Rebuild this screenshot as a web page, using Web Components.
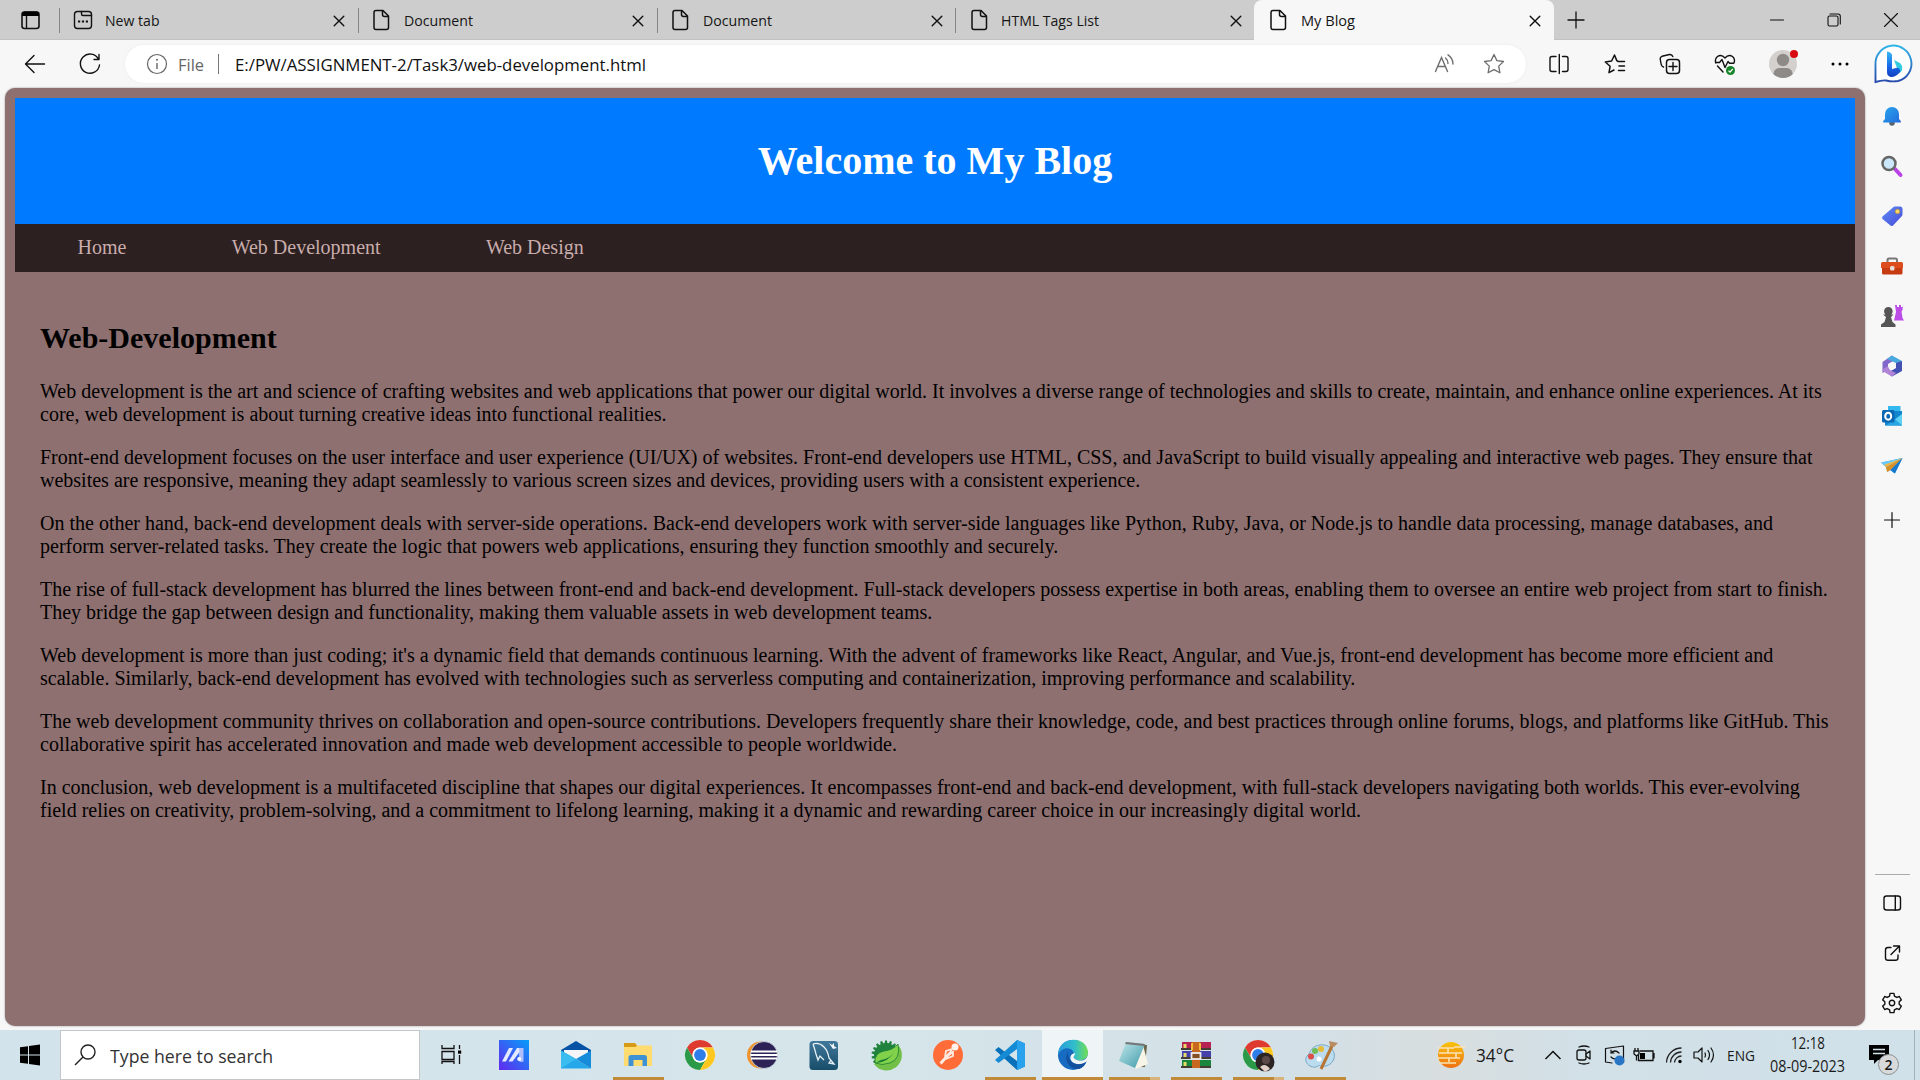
<!DOCTYPE html>
<html lang="en">
<head>
<meta charset="utf-8">
<title>My Blog</title>
<style>
html,body{margin:0;padding:0;width:1920px;height:1080px;overflow:hidden;background:#f7f7f7;font-family:"Open Sans","Noto Sans",sans-serif}
</style>
</head>
<body>
<desktop-screen></desktop-screen>
<script>
const S='fill="none" stroke="#111" stroke-width="1.4" stroke-linecap="round" stroke-linejoin="round"';
const line=w=>`fill="none" stroke="#111" stroke-width="${w}" stroke-linecap="round" stroke-linejoin="round"`;
const STAR='M0-9.5L2.9-3.4 9.5-2.5 4.7 2.1 5.9 8.8 0 5.6-5.9 8.8-4.7 2.1-9.5-2.5-2.9-3.4Z';
const CHROME='<circle r="15" fill="#fff"/><path d="M-13-7.5A15 15 0 0 1 13-7.5L0-7.5A7.5 7.5 0 0 0-6.5 3.7Z" fill="#de3a2f"/><path d="M-13-7.5A15 15 0 0 0 0 15L6.5 3.7A7.5 7.5 0 0 1-6.5 3.7Z" fill="#2a9a48"/><path d="M13-7.5A15 15 0 0 1 0 15L6.5 3.7A7.5 7.5 0 0 0 0-7.5Z" fill="#fcc81f"/><circle r="7.5" fill="#fff"/><circle r="5.9" fill="#2f7de9"/>';
const gear=(n,r1,r2)=>{let d='';for(let i=0;i<n;i++){const a=i*2*Math.PI/n-Math.PI/2;[[-.34,r1],[-.2,r2],[.2,r2],[.34,r1]].forEach(([o,r])=>{d+=(d?'L':'M')+(Math.cos(a+o*6/n)*r).toFixed(2)+' '+(Math.sin(a+o*6/n)*r).toFixed(2)});}return d+'Z'};
const ICONS={
workspaces:`<rect x="-8" y="-8" width="17" height="16.5" rx="2.5" ${line(1.6)}/><path d="M-8-4V-6Q-8-8.500-5.500-8.500H6.500Q9-8.500 9-6V-4Z" fill="#000"/><path d="M-3.500-4V8" ${S}/>`,
newtab:`<rect x="-8.500" y="-8.500" width="17" height="17" rx="3" ${S}/><path d="M-1.500-8.500V-6Q-1.500-4.500 0-4.500H8.500" ${S}/><path d="M-5 .4h2.200v2.200H-5zM-1.100.4h2.200v2.200H-1.100zM2.800.4H5v2.200H2.800z" fill="#111"/>`,
page:`<path d="M-7-7.500Q-7-9.500-5-9.500H2L7.500-4V7.500Q7.500 9.500 5.500 9.500H-5Q-7 9.500-7 7.500ZM1.500-9.500V-5.500Q1.500-3.500 3.500-3.500H7.500" ${line(1.5)}/>`,
close:`<path d="M-4.800-4.800L4.800 4.800M4.800-4.800L-4.800 4.800" ${S}/>`,
plus:`<path d="M-8 0H8M0-8V8" ${line(1.3)}/>`,
plus2:`<path d="M-7.500 0H7.500M0-7.500V7.500" ${line(1.2)}/>`,
min:`<path d="M-6.500 0H6.500" ${line(1.2)}/>`,
restore:`<rect x="-6" y="-4" width="10" height="10" rx="1.500" ${line(1.1)}/><path d="M-4-6H4Q6.300-6 6.300-3.700V4" ${line(1.1)}/>`,
winclose:`<path d="M-6.500-6.500L6.500 6.500M6.500-6.500L-6.500 6.500" ${line(1.1)}/>`,
back:`<path d="M9.500 0H-9.500M-1-8.500L-9.500 0-1 8.500" ${S}/>`,
reload:`<path d="M8.500-4.800A9.600 9.600 0 1 0 9.500 1M9-9.500V-4.500H4" ${S}/>`,
info:`<circle r="9.500" fill="none" stroke="#666" stroke-width="1.200"/><path d="M0-1V5" stroke="#666" stroke-width="1.400"/><circle cy="-4.300" r="1" fill="#666"/>`,
read:`<path d="M-8.500 7.500L-2.500-6.500 3.500 7.500M-6.500 2.500H1.500M1.500-6Q4-4 4-.5M4-9.200Q9-6 9 0" fill="none" stroke="#6d6d6d" stroke-width="1.400" stroke-linecap="round"/>`,
star:`<path d="${STAR}" fill="none" stroke="#6d6d6d" stroke-width="1.300" stroke-linejoin="round"/>`,
split:`<path d="M-3-7.500H-7Q-9-7.500-9-5.500V5.500Q-9 7.500-7 7.500H-3M3.500-7.500H7Q9-7.500 9-5.500V5.500Q9 7.500 7 7.500H3.500M.3-9.500V9.500" ${S}/>`,
favs:`<path d="M3.200-2.500L1.800-3.400-.5-9-3.400-3-9.700-2-4.900 2.300-6 8.700-1 6M3.200-2.500H9.500M4 2H9.500M3.500 6.500H9.500" ${line(1.5)}/>`,
collect:`<rect x="-3.500" y="-4.500" width="13" height="14" rx="3" ${line(1.5)}/><path d="M3-1.500V6.500M-1 2.500H7M-6.500 3Q-8.500 2.500-9-.5L-9.800-5Q-10-7-8-7.700L-.5-9.500Q2-9.800 2.800-7.500" ${S}/>`,
heart:`<path d="M-9.200-1Q-10.500-5-7.500-7.500-3.500-10 0-6 3.500-10 7.500-7.500 10.500-5 9-1M-7.500 2L-2 8M-9.500-1.500H-5.500L-3-4.500 0 3.500 3-2.500 4.500-.8H8.500" ${S}/><circle cx="5.500" cy="6.500" r="4.500" fill="#17852a"/><path d="M3.500 6.700L5 8.200 7.700 5" fill="none" stroke="#fff" stroke-width="1.200"/>`,
profile:`<clipPath id="pc"><circle r="14"/></clipPath><circle r="14" fill="#d3d0ce"/><g clip-path="url(#pc)" fill="#8d8a88"><circle cy="-4" r="6.200"/><path d="M-10 14Q-10 4-4 4H4Q10 4 10 14Z"/></g><circle cx="11" cy="-10" r="4" fill="#d90b12"/>`,
dots:`<circle cx="-7" r="1.500"/><circle r="1.500"/><circle cx="7" r="1.500"/>`,
bing:`<linearGradient id="bo" x2="0" y2="1"><stop stop-color="#31b6e8"/><stop offset="1" stop-color="#2849ad"/></linearGradient><linearGradient id="bb" x2="0" y2="1"><stop stop-color="#36b9f5"/><stop offset=".6" stop-color="#1767e8"/><stop offset="1" stop-color="#143fc0"/></linearGradient><path d="M-17.500 17.500V1A18 18 0 1 1 5 17Q-1 18-7 16.500-11 16-17.500 18Z" fill="#fff" stroke="url(#bo)" stroke-width="1.900"/><path d="M1-4L7-1Q11 3 8 8L-2 12-5 8 4 4Z" fill="#32cce0"/><path d="M-6-12.500Q-1.500-12-1 -9V5L5 3.500Q10 7 4 11 0 14-3.500 12.500-6 11.500-6 8Z" fill="url(#bb)"/>`,
bell:`<linearGradient id="be" x2="1" y2="1"><stop stop-color="#26a6ef"/><stop offset="1" stop-color="#246bdb"/></linearGradient><circle cy="7" r="2.800" fill="#59656f"/><path d="M-8.800 6.500V5L-7 3V-2A7 7 0 0 1 7-2V3L8.800 5V6.500Z" fill="url(#be)"/>`,
search:`<path d="M3 3L8.500 9" stroke="#ba42e6" stroke-width="4" stroke-linecap="round"/><circle cx="-3" cy="-2.500" r="6.500" fill="#cbe8fb" stroke="#666" stroke-width="2.500"/>`,
tag:`<linearGradient id="tg" x2="1" y2="1"><stop stop-color="#5b8df5"/><stop offset="1" stop-color="#4a4ad8"/></linearGradient><path d="M1-8.500Q1.700-9.500 3-9.500H8Q10.500-9.500 10.500-7V-2Q10.500-.5 9.500.5L1 9.500Q0 10.500-1.500 9.500L-9.500 3Q-10.500 1.500-9.500.5Z" fill="url(#tg)"/><circle cx="5.500" cy="-4.500" r="2.300" fill="#ffd86a" stroke="#b59450"/>`,
tools:`<path d="M-4.500-3.500V-6Q-4.500-7.500-3-7.500H3.500Q5-7.500 5-6V-3.500" fill="none" stroke="#777" stroke-width="2"/><rect x="-10" y="-2" width="20.500" height="10.500" rx="1.500" fill="#c63b12"/><path d="M-11-2.500Q-11-4-9.500-4H9.500Q11-4 11-2.500V2H-11Z" fill="#dd4c1c"/><rect x="-2" y="0" width="4.500" height="4.500" rx="1.500" fill="#e9dcd8"/>`,
chess:`<path d="M3-11H5V-9H7V-11H9V-9H11V-11L10.500-6 9.500-4.500 10.500 2 12 4.500H2L4-4Z" fill="#bb4ce8"/><path d="M-11 11V8.500L-7.500 6-6 1-9-1.500H-6.500A4.300 4.300 0 1 1-.8-1.500H1.500L-1 1 .5 6 3.500 8.500V11Z" fill="#555"/>`,
m365:`<path d="M-9.500-4L0-10.500 3-6-4-2V4L-9.500 7Z" fill="#8067c9"/><path d="M-5-7L0-10.500 10-5V3L4 0V-3L-3-6Z" fill="#4ba8df"/><path d="M10-5V5L0 10.500-5 7 4 2V-3Z" fill="#4350b4"/><path d="M-9.500 3.500L-4 0-2 4 4 7 0 10.500-9.500 5Z" fill="#b183d6"/><circle r="3.600" fill="#f7f7f7"/>`,
outlook:`<path d="M-4-10H8.500V1H-4Z" fill="#33b7ef"/><path d="M-7-5H10V9.500H-7Z" fill="#1285cf"/><path d="M10-2V9.500L2 4Z" fill="#5fd2f4"/><path d="M-6 9.500L3 3 10 9.500Z" fill="#2aa6e5"/><rect x="-10" y="-6" width="12.500" height="12.500" rx="1.500" fill="#0868b4"/><ellipse cx="-3.800" cy=".2" rx="3" ry="3.500" fill="none" stroke="#fff" stroke-width="2"/>`,
plane:`<path d="M-11-3.500L10.500-8 2.500 7.500-2 4-4.500 6-6 1Z" fill="#40a9eb"/><path d="M10.500-8L-6 1-5 6-1.500 4Z" fill="#d99125"/><path d="M10.500-8L-1.500 4 3 7.500Z" fill="#1778ce"/><path d="M-11-3.500L10.500-8-6 1Z" fill="#6bcaf4"/><path d="M10.500-8L-8-1-6 1Z" fill="#f5b33b"/>`,
panel:`<rect x="-8" y="-7" width="16.500" height="14" rx="2.500" ${S}/><path d="M3.300-7V7" ${S}/>`,
external:`<path d="M-1-5.500H-4Q-6.500-5.500-6.500-3V5Q-6.500 7.300-4 7.300H3.500Q6 7.300 6 5V2M1.500-7H7.500V-1M7-6.500L-1 1.500" ${S}/>`,
gear:`<path d="${gear(6,7.300,9.800)}" ${S}/><circle r="2.700" ${S}/>`,
start:`<path d="M-10-7.800L-2-8.800V-.6H-10ZM-1-9L10-10.500V-.6H-1ZM-10 .6H-2V8.800L-10 7.800ZM-1 .6H10V10.500L-1 9Z" fill="#000"/>`,
find:`<circle cx="3" cy="-3" r="7" fill="none" stroke="#222" stroke-width="1.400"/><path d="M-2 2L-10 10" stroke="#222" stroke-width="1.500"/>`,
tasks:`<path d="M-10-10V-6.500H2V-10M-10-3.500H2V4.500H-10ZM-10 9V6.500H2V9M7.500-10V-6M7.500 0V9" fill="none" stroke="#111" stroke-width="1.300"/><rect x="6" y="-4.500" width="3.200" height="3.200"/>`,
myasus:`<linearGradient id="ma" y1="1" x2="1" y2="0"><stop stop-color="#6229ee"/><stop offset="1" stop-color="#069dfa"/></linearGradient><path d="M-15-15H15V15H-15Z" fill="url(#ma)"/><path d="M-12 6.500L-5-7H-1L-8 6.500ZM-5.500 6.500L3-7H9V6.500H5.500V-3L-1.500 6.500Z" fill="#e3eaff"/><path d="M5-7H9.500V6.500H6Z" fill="#b2bfff"/><circle cx="5.200" cy="4" r="2" fill="#fff"/>`,
mail:`<path d="M-15-5L0-14 15-5V8H-15Z" fill="#0752a5"/><path d="M-12-5H12V6L0 9-12 5Z" fill="#f4f5f6"/><path d="M-15-4.500L0 4 15 13.500H-15Z" fill="#25a8ea"/><path d="M15-4.500L0 4 15 13.500Z" fill="#168bd9"/><path d="M-15-4.500L0 4-15 13.500Z" fill="#3bbcf0"/>`,
folder:`<path d="M-14-12H-3L0-9H13V10H-14Z" fill="#ffd35c"/><path d="M-14-12H-3L-1-9-3-8H-14Z" fill="#d79a17"/><path d="M-14-8H-2L0-9.500H14V11H-14Z" fill="#ffdb70"/><path d="M-9.500 11V2.500Q-9.500 0-7 0H6.500Q9 0 9 2.500V11H4.500V5H-4.500V11Z" fill="#3e92d3"/>`,
chrome:CHROME,
eclipse:`<circle cx="-1.500" r="13.500" fill="#f1942d"/><circle cx="2" r="13.500" fill="#2d2255" stroke="#d3e2e9" stroke-width=".8"/><path d="M-11-3.500H15M-11.500 0H15.500M-11 3.500H15" stroke="#fff" stroke-width="1.800"/>`,
mysql:`<linearGradient id="my" x2="0" y2="1"><stop stop-color="#41789a"/><stop offset="1" stop-color="#184d6a"/></linearGradient><rect x="-14.500" y="-14" width="28.500" height="29" rx="3.500" fill="url(#my)"/><path d="M-11-11Q-5-13 0-8 4-4 5 3L10 9 5 8 7 5M-11-11Q-9-5-8-1L-6 5-4 1 0 5" fill="none" stroke="#e5f1f6" stroke-width="1.300"/><path d="M5-12L8-10 10-12 10-9 13-7 9-6Z" fill="#f2f7fa"/>`,
spring:`<path d="${gear(18,12,14.500)}" fill="#20833d"/><path d="M13-9A15 15 0 1 1-12 9Z" fill="#73c048"/><path d="M-11 8Q-12-2-2-4 7-5 12-11 15 4 4 8-4 11-11 8Z" fill="#82d14a" stroke="#187c34" stroke-width=".8"/><path d="M-11 8Q2 8 9-4 4 4-5 5Z" fill="#187c34"/>`,
postman:`<circle r="15" fill="#ff6c37"/><circle cx="7" cy="-8" r="3.500" fill="#fff4ed"/><path d="M4-5L-8 8M5-3L1 0-7 9M-3 2L-2-4 4-6M5-4V1L-2 4" fill="none" stroke="#ffeadf" stroke-width="1.800"/>`,
vscode:`<path d="M7-15L15-11.500V11.500L7 15-15-5-11.500-8 7 6Z" fill="#0871b9"/><path d="M7-15V-6L-11.500 8-15 5Z" fill="#168bd5"/><path d="M7-15L15-11.500V11.500L7 15Z" fill="#29a2ee"/>`,
edge:`<linearGradient id="e1"><stop stop-color="#2a9bdc"/><stop offset=".55" stop-color="#31bdcb"/><stop offset="1" stop-color="#70df52"/></linearGradient><circle r="15" fill="#176bc0"/><path d="M-15 0C-15-20 15-20 15-2 15 5 6 7 2 4-2 2 3 0 0-4-4-9-12-7-15 0Z" fill="url(#e1)"/><path d="M15-1C14 6 7 7 2 4-1 2 2 1 2-2-5-1-4 8 4 9 8 11 12 8 14 6L17 4V-1Z" fill="#eff4f5"/><path d="M-5-3C-10 5-3 15 6 14 10 13 13 9 13 7 2 13-6 6-5-3Z" fill="#12509d"/>`,
notepad:`<path d="M-7-11L13-10 11 12-1 12Z" fill="#6b6548"/><path d="M9-10L14 9 2 14-2 9Z" fill="#f7f4e8"/><linearGradient id="np" x2="1" y2="1"><stop stop-color="#c3e8eb"/><stop offset="1" stop-color="#3c98a9"/></linearGradient><path d="M-8-13L11-11 1 13-15 6Z" fill="url(#np)"/><path d="M-8-13L11-11 10-9-9-11Z" fill="#777"/>`,
rar:`<path d="M-14-13H15V-6H-14Z" fill="#b62251"/><path d="M-14-4H15V3H-14Z" fill="#4540a9"/><path d="M-14 5H15V13H-14Z" fill="#19863d"/><path d="M-15-6H15M-15 3H15M-15 12H15" stroke="#453d34" stroke-width="2"/><path d="M-11-11V-7M-11-2V2M-11 7V11" stroke="#e8da68" stroke-width="3"/><rect x="-4" y="-13" width="8" height="26" fill="#c76720"/><path d="M-4-12V-5M4-12V-5" stroke="#f2bc36" stroke-width="2"/><rect x="-4.500" y="-2" width="9" height="6" fill="#845126" stroke="#eee" stroke-width="1.800"/>`,
chromeuser:CHROME+`<circle cx="7" cy="7" r="9.500" fill="#2d2524"/><ellipse cx="8" cy="5" rx="4" ry="4" fill="#5b4947"/><path d="M2 12Q7 7 12 14L7 17Z" fill="#e1d0c7"/>`,
paint:`<path d="M-11-1C-8-11 5-13 12-6 17 0 14 9 6 11 1 13-1 9-2 11-7 15-18 8-13 1Z" fill="#bbdcef" stroke="#7aa8c3" stroke-width="1"/><circle cx="-9" cy="1.500" r="3" fill="#dc4d47"/><circle cx="-5" cy="-4" r="3" fill="#71bd55"/><circle cx="1" cy="-6" r="3" fill="#e9bb35"/><circle cx="-1" cy="4" r="2.500" fill="#fff"/><path d="M12-9L1 14" stroke="#b77535" stroke-width="3"/><path d="M10-9L9-14 18-12 14-8Z" fill="#b88d64"/>`,
sun:`<linearGradient id="sn" x2="0" y2="1"><stop stop-color="#f9c30a"/><stop offset="1" stop-color="#ed7115"/></linearGradient><circle r="13" fill="url(#sn)"/><path d="M-13-7H3M3-8H14M-12-2H11M-14 3H9M-12 8H5M-3-2V-7M5-2V3M-2 3V7" stroke="#fbe3b4" stroke-width="1.600"/>`,
chevron:`<path d="M-7.500 4L0-3.500 7.500 4" fill="none" stroke="#111" stroke-width="1.500"/>`,
camera:`<rect x="-7" y="-5" width="9" height="10" rx="2" ${line(1.3)}/><path d="M2-1L6-4V4L2 1M-5-8Q0-10 5-8M-5 8Q0 10 5 8" ${line(1.3)}/>`,
sync:`<path d="M-8.500-6.500L9.500-9V7H5M-8.500-6.500V7L-2 8M5-2Q1-6-3-2V-5M-3-2H0M-3 2Q0 5 3 3" ${line(1.2)}/><circle cx="5.500" cy="5.500" r="5" fill="#2775c4"/>`,
battery:`<path d="M-4-4H9V5.500H-5.500V0M10-2V3.500M-9-7V-4M-6-7V-4M-10-4H-5V-1L-7.500 1-10-1ZM-7.500 1V5.500" fill="none" stroke="#111" stroke-width="1.300"/><path d="M-4-2H1V4H-4Z"/>`,
wifi:`<path d="M-7.500 7.500A15 15 0 0 1 7.500-7M-3.500 7.500A11 11 0 0 1 7.500-3M.5 7.500A7 7 0 0 1 7.500 1" fill="none" stroke="#222" stroke-width="1.300"/><circle cx="6" cy="6.500" r="1.700"/>`,
volume:`<path d="M-10-3H-6L-2-7V7L-6 3H-10ZM1-2Q2 0 1 2M4-4.500Q7 0 4 4.500M7-7Q12 0 7 7" ${line(1.2)}/>`,
notes:`<path d="M-10-10H10V5H-1L-5 9V5H-10Z"/><path d="M-6-5.500H6M-6-1.500H6" stroke="#d3e2e9" stroke-width="1.500"/>`
};
class UiIcon extends HTMLElement{connectedCallback(){
 const s=this.attachShadow({mode:'open'});
 s.innerHTML=`<style>:host{display:flex;align-items:center;justify-content:center;flex:none;width:${this.getAttribute('w')||32}px;height:${this.getAttribute('h')||32}px}svg{width:32px;height:32px;overflow:visible;flex:none}</style><svg viewBox="-16 -16 32 32" aria-hidden="true">${ICONS[this.getAttribute('name')]}</svg>`;}}
customElements.define('ui-icon',UiIcon);

/* A single-line label condensed horizontally to the width given in w. */
class UiLabel extends HTMLElement{connectedCallback(){
 const s=this.attachShadow({mode:'open'});
 s.innerHTML=`<style>:host{display:block;flex:none;white-space:nowrap}span{display:inline-block;white-space:nowrap;transform-origin:0 50%}</style><span><slot></slot></span>`;
 const sp=s.querySelector('span'),w=+this.getAttribute('w');
 this.style.width=w+'px';
 sp.style.transform=`scaleX(${(w/sp.getBoundingClientRect().width).toFixed(4)})`;}}
customElements.define('ui-label',UiLabel);

class BrowserTab extends HTMLElement{connectedCallback(){
 const a=this.hasAttribute('active');
 this.attachShadow({mode:'open'}).innerHTML=`<style>:host{display:flex;flex:none;align-items:center;width:298.800px;height:40px;box-sizing:border-box;font-size:15px;color:#151515;padding-left:7.500px}
 :host([active]){background:#f7f7f7;border-radius:8px 8px 0 0;margin-left:-1px;padding-left:9px;width:300px}
 i{width:1px;height:25px;background:#858585;margin-left:-8px;margin-right:7px}.t{flex:1;display:flex;padding-left:6.500px;line-height:22px;margin-top:-1px}ui-icon:first-of-type{margin-left:-.5px}ui-icon[name=close]{margin-right:3px;margin-top:1px}</style>
 ${a?'':'<i></i>'}<ui-icon name="${this.getAttribute('icon')||'page'}"></ui-icon><div class="t"><ui-label w="${this.getAttribute('w')}">${this.getAttribute('label')}</ui-label></div><ui-icon name="close"></ui-icon>`;}}
customElements.define('browser-tab',BrowserTab);

class TabStrip extends HTMLElement{connectedCallback(){
 this.attachShadow({mode:'open'}).innerHTML=`<style>:host{display:flex;height:40px;background:#cdcdcd;align-items:center;box-shadow:inset 0 -1px #c2c2c2}.g{flex:1}</style>
 <ui-icon name="workspaces" w="59.500"></ui-icon>
 <browser-tab icon="newtab" label="New tab" w="54.500"></browser-tab><browser-tab label="Document" w="69"></browser-tab><browser-tab label="Document" w="69"></browser-tab><browser-tab label="HTML Tags List" w="98"></browser-tab><browser-tab active label="My Blog" w="54"></browser-tab>
 <ui-icon name="plus" w="44"></ui-icon><div class="g"></div><ui-icon name="min" w="57"></ui-icon><ui-icon name="restore" w="57"></ui-icon><ui-icon name="winclose" w="58"></ui-icon>`;}}
customElements.define('tab-strip',TabStrip);

class AddressBar extends HTMLElement{connectedCallback(){
 this.attachShadow({mode:'open'}).innerHTML=`<style>:host{display:flex;height:48px;background:#f7f7f7;align-items:center;font-size:17px}
 .f{width:1401px;height:38px;box-sizing:border-box;border-radius:19px;background:#fff;display:flex;align-items:center;padding-left:16px;margin-right:6px;box-shadow:0 0 3px #e9e9e9}
 .n{margin-left:4.500px;color:#666}i{width:1px;height:20px;background:#777;margin:0 16.500px 0 14px}.g{flex:1}.u{color:#111}</style>
 <ui-icon name="back" w="70"></ui-icon><ui-icon name="reload" w="40"></ui-icon><div style="width:15px"></div>
 <div class="f"><ui-icon name="info"></ui-icon><ui-label class="n" w="26">File</ui-label><i></i><ui-label class="u" w="411">E:/PW/ASSIGNMENT-2/Task3/web-development.html</ui-label><div class="g"></div><ui-icon name="read" w="50"></ui-icon><ui-icon name="star" w="50"></ui-icon><div style="width:7px"></div></div>
 <ui-icon name="split" w="54"></ui-icon><ui-icon name="favs" w="57"></ui-icon><ui-icon name="collect" w="53"></ui-icon><ui-icon name="heart" w="57"></ui-icon><ui-icon name="profile" w="60"></ui-icon><ui-icon name="dots" w="54"></ui-icon><ui-icon name="bing" w="52"></ui-icon>`;}}
customElements.define('address-bar',AddressBar);

class EdgeSidebar extends HTMLElement{connectedCallback(){
 this.attachShadow({mode:'open'}).innerHTML=`<style>:host{display:flex;flex-direction:column;align-items:center;width:36px;padding:2.500px 10px 0 9px}.g{flex:1}hr{width:35px;height:1px;border:0;margin:0 0 2.500px;background:#aaa}</style>
 ${['bell','search','tag','tools','chess','m365','outlook','plane'].map(n=>`<ui-icon name="${n}" h="50"></ui-icon>`).join('')}<ui-icon name="plus2" h="58"></ui-icon><div class="g"></div><hr>${['panel','external','gear'].map(n=>`<ui-icon name="${n}" h="50"></ui-icon>`).join('')}<div style="height:2.500px"></div>`;}}
customElements.define('edge-sidebar',EdgeSidebar);

class BlogPage extends HTMLElement{connectedCallback(){
 const P=["Web development is the art and science of crafting websites and web applications that power our digital world. It involves a diverse range of technologies and skills to create, maintain, and enhance online experiences. At its core, web development is about turning creative ideas into functional realities.",
"Front-end development focuses on the user interface and user experience (UI/UX) of websites. Front-end developers use HTML, CSS, and JavaScript to build visually appealing and interactive web pages. They ensure that websites are responsive, meaning they adapt seamlessly to various screen sizes and devices, providing users with a consistent experience.",
"On the other hand, back-end development deals with server-side operations. Back-end developers work with server-side languages like Python, Ruby, Java, or Node.js to handle data processing, manage databases, and perform server-related tasks. They create the logic that powers web applications, ensuring they function smoothly and securely.",
"The rise of full-stack development has blurred the lines between front-end and back-end development. Full-stack developers possess expertise in both areas, enabling them to oversee an entire web project from start to finish. They bridge the gap between design and functionality, making them valuable assets in web development teams.",
"Web development is more than just coding; it's a dynamic field that demands continuous learning. With the advent of frameworks like React, Angular, and Vue.js, front-end development has become more efficient and scalable. Similarly, back-end development has evolved with technologies such as serverless computing and containerization, improving performance and scalability.",
"The web development community thrives on collaboration and open-source contributions. Developers frequently share their knowledge, code, and best practices through online forums, blogs, and platforms like GitHub. This collaborative spirit has accelerated innovation and made web development accessible to people worldwide.",
"In conclusion, web development is a multifaceted discipline that shapes our digital experiences. It encompasses front-end and back-end development, with full-stack developers navigating both worlds. This ever-evolving field relies on creativity, problem-solving, and a commitment to lifelong learning, making it a dynamic and rewarding career choice in our increasingly digital world."];
 this.attachShadow({mode:'open'}).innerHTML=`<style>:host{display:block;flex:none;width:1860px;height:938px;box-sizing:border-box;padding:10px;background:#8f7070;border-radius:10px;box-shadow:0 0 2px #8a8a8a;font-family:"Liberation Serif",serif;font-size:20px;line-height:23px;color:#000}
 header{background:#007bff;height:126px;display:flex;align-items:center;justify-content:center}h1{margin:0;font-size:40px;line-height:46px;color:#fff}
 nav{height:48px;box-sizing:border-box;background:#2d2020;display:flex;align-items:center;padding:0 0 1px 62.500px;gap:105.300px;color:#c9acac}
 main{padding:25px}h2{font-size:30px;line-height:34px;margin:24px 0 25px}p{margin:0 0 20px}</style>
 <header><h1>Welcome to My Blog</h1></header><nav><span>Home</span><span>Web Development</span><span>Web Design</span></nav><main><h2>Web-Development</h2>${P.map(t=>`<p>${t}</p>`).join('')}</main>`;}}
customElements.define('blog-page',BlogPage);

class TaskApp extends HTMLElement{connectedCallback(){
 const st=this.getAttribute('state')||'';
 this.attachShadow({mode:'open'}).innerHTML=`<style>:host{display:flex;flex-direction:column;flex:none;align-items:center;width:62px;height:50px}
 .b{display:flex;width:51px;height:3px;margin-top:auto}.b b{flex:1;background:#c08a38}.b u{width:10px;background:#d8b37c}
 :host([state=active]){background:#eff4f6;width:61px;margin-left:1px}:host([state=active]) .b{width:61px}</style>
 <ui-icon name="${this.getAttribute('name')}" h="50" style="margin-bottom:-3px"></ui-icon>${st?`<div class="b"><b></b>${st==='multi'?'<u></u>':''}</div>`:''}`;}}
customElements.define('task-app',TaskApp);

class TaskBar extends HTMLElement{connectedCallback(){
 const apps=[['myasus'],['mail'],['folder','open'],['chrome'],['eclipse'],['mysql'],['spring'],['postman'],['vscode','open'],['edge','active'],['notepad','multi'],['rar','open'],['chromeuser','multi'],['paint','open']];
 this.attachShadow({mode:'open'}).innerHTML=`<style>:host{display:flex;height:50px;align-items:center;background:linear-gradient(90deg,#d2e3eb 0,#d5e5ea 45%,#d3e0e7 68%,#d8dedf 75%,#d2e0e7 82%,#d0e1e9);color:#1a1a1a;font-size:16px}
 .s{display:flex;align-items:center;box-sizing:border-box;width:360px;height:50px;border:1px solid #c3c7c9;background:#fff;padding-left:8px;font-size:18.500px;color:#333}
 .t{margin-left:9px}.g{flex:1}.c{display:flex;flex-direction:column;align-items:center;width:75px;font-size:15.500px;line-height:23px;margin:0 14px 0 15px}
 .n{display:flex;position:relative}.n b{position:absolute;left:19px;top:15px;width:19px;height:19px;border:1px solid #8b8f91;border-radius:50%;background:#d7d9da;font:600 14px/19px "Open Sans",sans-serif;text-align:center}
 .l{width:1px;height:50px;background:#a4b1b7;margin-left:15px;margin-right:5px}</style>
 <ui-icon name="start" w="60"></ui-icon><div class="s"><ui-icon name="find"></ui-icon><ui-label class="t" w="163">Type here to search</ui-label></div><ui-icon name="tasks" w="63"></ui-icon>
 ${apps.map(([n,s])=>`<task-app name="${n}"${s?` state="${s}"`:''}></task-app>`).join('')}
 <div class="g"></div><ui-icon name="sun" w="38"></ui-icon><ui-label w="38" style="margin-left:6px;font-size:17.500px">34°C</ui-label>
 <ui-icon name="chevron" w="30" style="margin-left:24px"></ui-icon><ui-icon name="camera" w="31"></ui-icon><ui-icon name="sync" w="29"></ui-icon><ui-icon name="battery" w="31"></ui-icon><ui-icon name="wifi" w="30"></ui-icon><ui-icon name="volume" w="30"></ui-icon><ui-label w="28" style="margin-left:8px;font-size:15px">ENG</ui-label>
 <div class="c"><ui-label w="34">12:18</ui-label><ui-label w="75">08-09-2023</ui-label></div><div class="n"><ui-icon name="notes" w="40"></ui-icon><b>2</b></div><div class="l"></div>`;}}
customElements.define('task-bar',TaskBar);

class DesktopScreen extends HTMLElement{connectedCallback(){
 this.attachShadow({mode:'open'}).innerHTML=`<style>:host{display:flex;flex-direction:column;width:1920px;height:1080px;overflow:hidden;background:#f7f7f7}.m{display:flex;height:942px;padding-left:5px}</style>
 <tab-strip></tab-strip><address-bar></address-bar><div class="m"><blog-page></blog-page><edge-sidebar></edge-sidebar></div><task-bar></task-bar>`;}}
customElements.define('desktop-screen',DesktopScreen);
</script>
</body>
</html>
